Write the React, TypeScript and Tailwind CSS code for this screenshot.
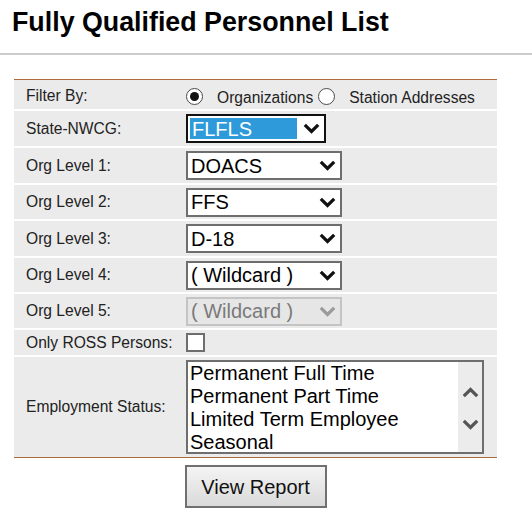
import React from "react";

const font = { fontFamily: '"Liberation Sans", Arial, sans-serif' };

function Chevron({ color = "#111", up = false }: { color?: string; up?: boolean }) {
  return (
    <svg width="17" height="11" viewBox="0 0 17 11" className="block">
      <polyline
        points={up ? "1.8,9.2 8.5,2.5 15.2,9.2" : "1.8,1.8 8.5,8.5 15.2,1.8"}
        fill="none"
        stroke={color}
        strokeWidth="3.2"
      />
    </svg>
  );
}

function Select({ value, disabled = false }: { value: string; disabled?: boolean }) {
  return (
    <div
      className={
        "flex h-[29px] w-[156px] items-center justify-between border-2 pl-[3px] pr-[4px] " +
        (disabled ? "border-[#c4c4c4] bg-[#e6e6e6] text-[#7a7a7a]" : "border-[#6e6e6e] bg-white text-black")
      }
    >
      <span className="text-[20px] leading-none">{value}</span>
      <Chevron color={disabled ? "#9a9a9a" : "#111"} />
    </div>
  );
}

function Row({
  label,
  h,
  extra = "",
  children,
}: {
  label: string;
  h: string;
  extra?: string;
  children: React.ReactNode;
}) {
  return (
    <div className={"flex bg-[#ebebeb] " + h}>
      <div className={"flex w-[170px] shrink-0 items-center pl-[12px] text-[15.6px] text-[#222] " + extra}>{label}</div>
      <div className={"flex items-center pl-[2px] " + extra}>{children}</div>
    </div>
  );
}

function Radio({ checked }: { checked: boolean }) {
  return (
    <div className="flex h-[17px] w-[17px] items-center justify-center rounded-full border-[1.5px] border-[#4a4a4a] bg-white">
      {checked && <div className="h-[9px] w-[9px] rounded-full bg-[#111]" />}
    </div>
  );
}

export default function App() {
  return (
    <div className="min-h-[516px] w-[532px] bg-white" style={font}>
      <div className="h-[53px] pl-[12px] pt-[9px]">
        <h1 className="text-[26.8px] font-bold leading-none text-black">Fully Qualified Personnel List</h1>
      </div>
      <div className="h-[2px] bg-[#cccccc]" />
      <div className="ml-[14px] mt-[24px] w-[483px]">
        <div className="h-[1px] bg-[#b06a40]" />
        <div className="flex flex-col gap-[2px]">
          <Row label="Filter By:" h="h-[29px]" extra="pt-[3px]">
            <div className="flex items-center text-[15.6px] text-[#222]">
              <Radio checked />
              <span className="ml-[14px] pt-[3px]">Organizations</span>
              <span className="ml-[5px]"><Radio checked={false} /></span>
              <span className="ml-[14px] pt-[3px]">Station Addresses</span>
            </div>
          </Row>
          <Row label="State-NWCG:" h="h-[35px]">
            <div className="flex h-[29px] w-[140px] items-center border-2 border-[#111] bg-white p-[2px] pr-[4px]">
              <div className="flex h-full w-[107px] items-center bg-[#2f9ad9] pl-[2px] text-[20px] leading-none text-white">
                FLFLS
              </div>
              <div className="ml-auto">
                <Chevron />
              </div>
            </div>
          </Row>
          <Row label="Org Level 1:" h="h-[35px]">
            <Select value="DOACS" />
          </Row>
          <Row label="Org Level 2:" h="h-[34px]">
            <Select value="FFS" />
          </Row>
          <Row label="Org Level 3:" h="h-[35px]">
            <Select value="D-18" />
          </Row>
          <Row label="Org Level 4:" h="h-[34px]">
            <Select value="( Wildcard )" />
          </Row>
          <Row label="Org Level 5:" h="h-[34px]">
            <Select value="( Wildcard )" disabled />
          </Row>
          <Row label="Only ROSS Persons:" h="h-[25px]">
            <div className="h-[19px] w-[19px] border-2 border-[#6e6e6e] bg-white" />
          </Row>
          <Row label="Employment Status:" h="h-[100px]">
            <div className="flex h-[94px] w-[298px] border-2 border-[#6e6e6e] bg-white">
              <div className="flex-1 pl-[2px] text-[20px] leading-[23px] text-black">
                <div>Permanent Full Time</div>
                <div>Permanent Part Time</div>
                <div>Limited Term Employee</div>
                <div>Seasonal</div>
              </div>
              <div className="flex w-[24px] flex-col items-center bg-[#ececec] pt-[25px]">
                <Chevron up color="#555" />
                <div className="h-[21px]" />
                <Chevron color="#555" />
              </div>
            </div>
          </Row>
        </div>
        <div className="h-[1px] bg-[#b06a40]" />
        <div className="mt-[7px] flex justify-center">
          <button className="h-[43px] w-[142px] border-2 border-[#707070] bg-gradient-to-b from-[#f4f4f4] to-[#dadada] text-[20px] text-[#111]">
            View Report
          </button>
        </div>
      </div>
    </div>
  );
}
